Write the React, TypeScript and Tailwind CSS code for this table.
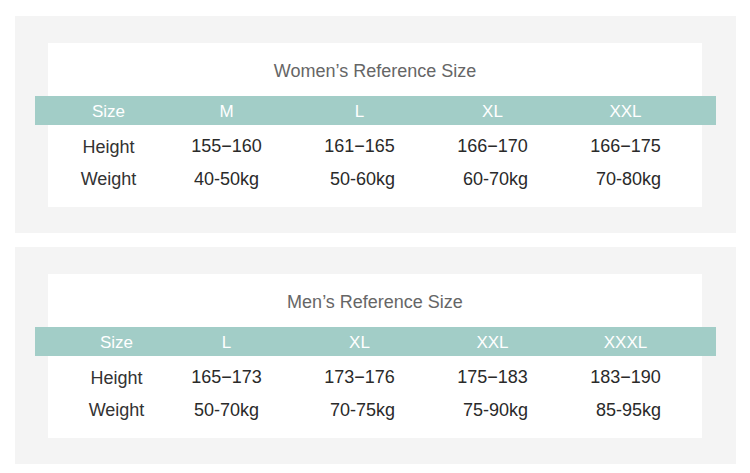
import React from 'react';

type Table = {
  title: string;
  sizes: string[];
  heights: string[];
  weights: string[];
  labelPad: string;
};

const tables: Table[] = [
  {
    title: 'Women’s Reference Size',
    sizes: ['M', 'L', 'XL', 'XXL'],
    heights: ['155−160', '161−165', '166−170', '166−175'],
    weights: ['40-50kg', '50-60kg', '60-70kg', '70-80kg'],
    labelPad: 'pl-[22px]',
  },
  {
    title: 'Men’s Reference Size',
    sizes: ['L', 'XL', 'XXL', 'XXXL'],
    heights: ['165−173', '173−176', '175−183', '183−190'],
    weights: ['50-70kg', '70-75kg', '75-90kg', '85-95kg'],
    labelPad: 'pl-[38px]',
  },
];

const cols = 'grid grid-cols-[125px_133px_133px_133px_133px] items-center';

function SizeTable({ table }: { table: Table }) {
  return (
    <section className="ml-[15px] mr-[14px] bg-[#f4f4f4] pl-[33px] pt-[27px] pr-[34px] pb-[26px]">
      <div className="bg-white">
        {/* Title */}
        <div className="flex h-[53px] items-center justify-center pt-[3px] text-[18px] text-[#666666]">
          {table.title}
        </div>

        <div className="-ml-[13px] -mr-[14px]">
          {/* Header bar */}
          <div className={`${cols} h-[29px] bg-[#a2cdc7] pt-[2px] text-[17px] text-white`}>
            <div className={`text-center ${table.labelPad}`}>Size</div>
            {table.sizes.map((s) => (
              <div key={s} className="text-center">
                {s}
              </div>
            ))}
          </div>

          {/* Rows */}
          <div className="pt-[6px] pb-[12px] text-[18px] text-[#2a2a2a]">
            <div className={`${cols} h-[32px]`}>
              <div className={`text-center text-[#333333] ${table.labelPad}`}>Height</div>
              {table.heights.map((h) => (
                <div key={h} className="text-center -mt-[2px]">
                  {h}
                </div>
              ))}
            </div>
            <div className={`${cols} h-[32px]`}>
              <div className={`text-center text-[#333333] ${table.labelPad}`}>Weight</div>
              {table.weights.map((w, i) => (
                <div key={w} className={`text-center ${i === 0 ? '' : 'pl-[6px]'}`}>
                  {w}
                </div>
              ))}
            </div>
          </div>
        </div>
      </div>
    </section>
  );
}

export default function App() {
  return (
    <div className="h-[473px] w-[750px] overflow-hidden bg-white pt-4 font-['Liberation_Sans',Arial,sans-serif]">
      <div className="flex flex-col gap-[14px]">
        {tables.map((t) => (
          <SizeTable key={t.title} table={t} />
        ))}
      </div>
    </div>
  );
}
